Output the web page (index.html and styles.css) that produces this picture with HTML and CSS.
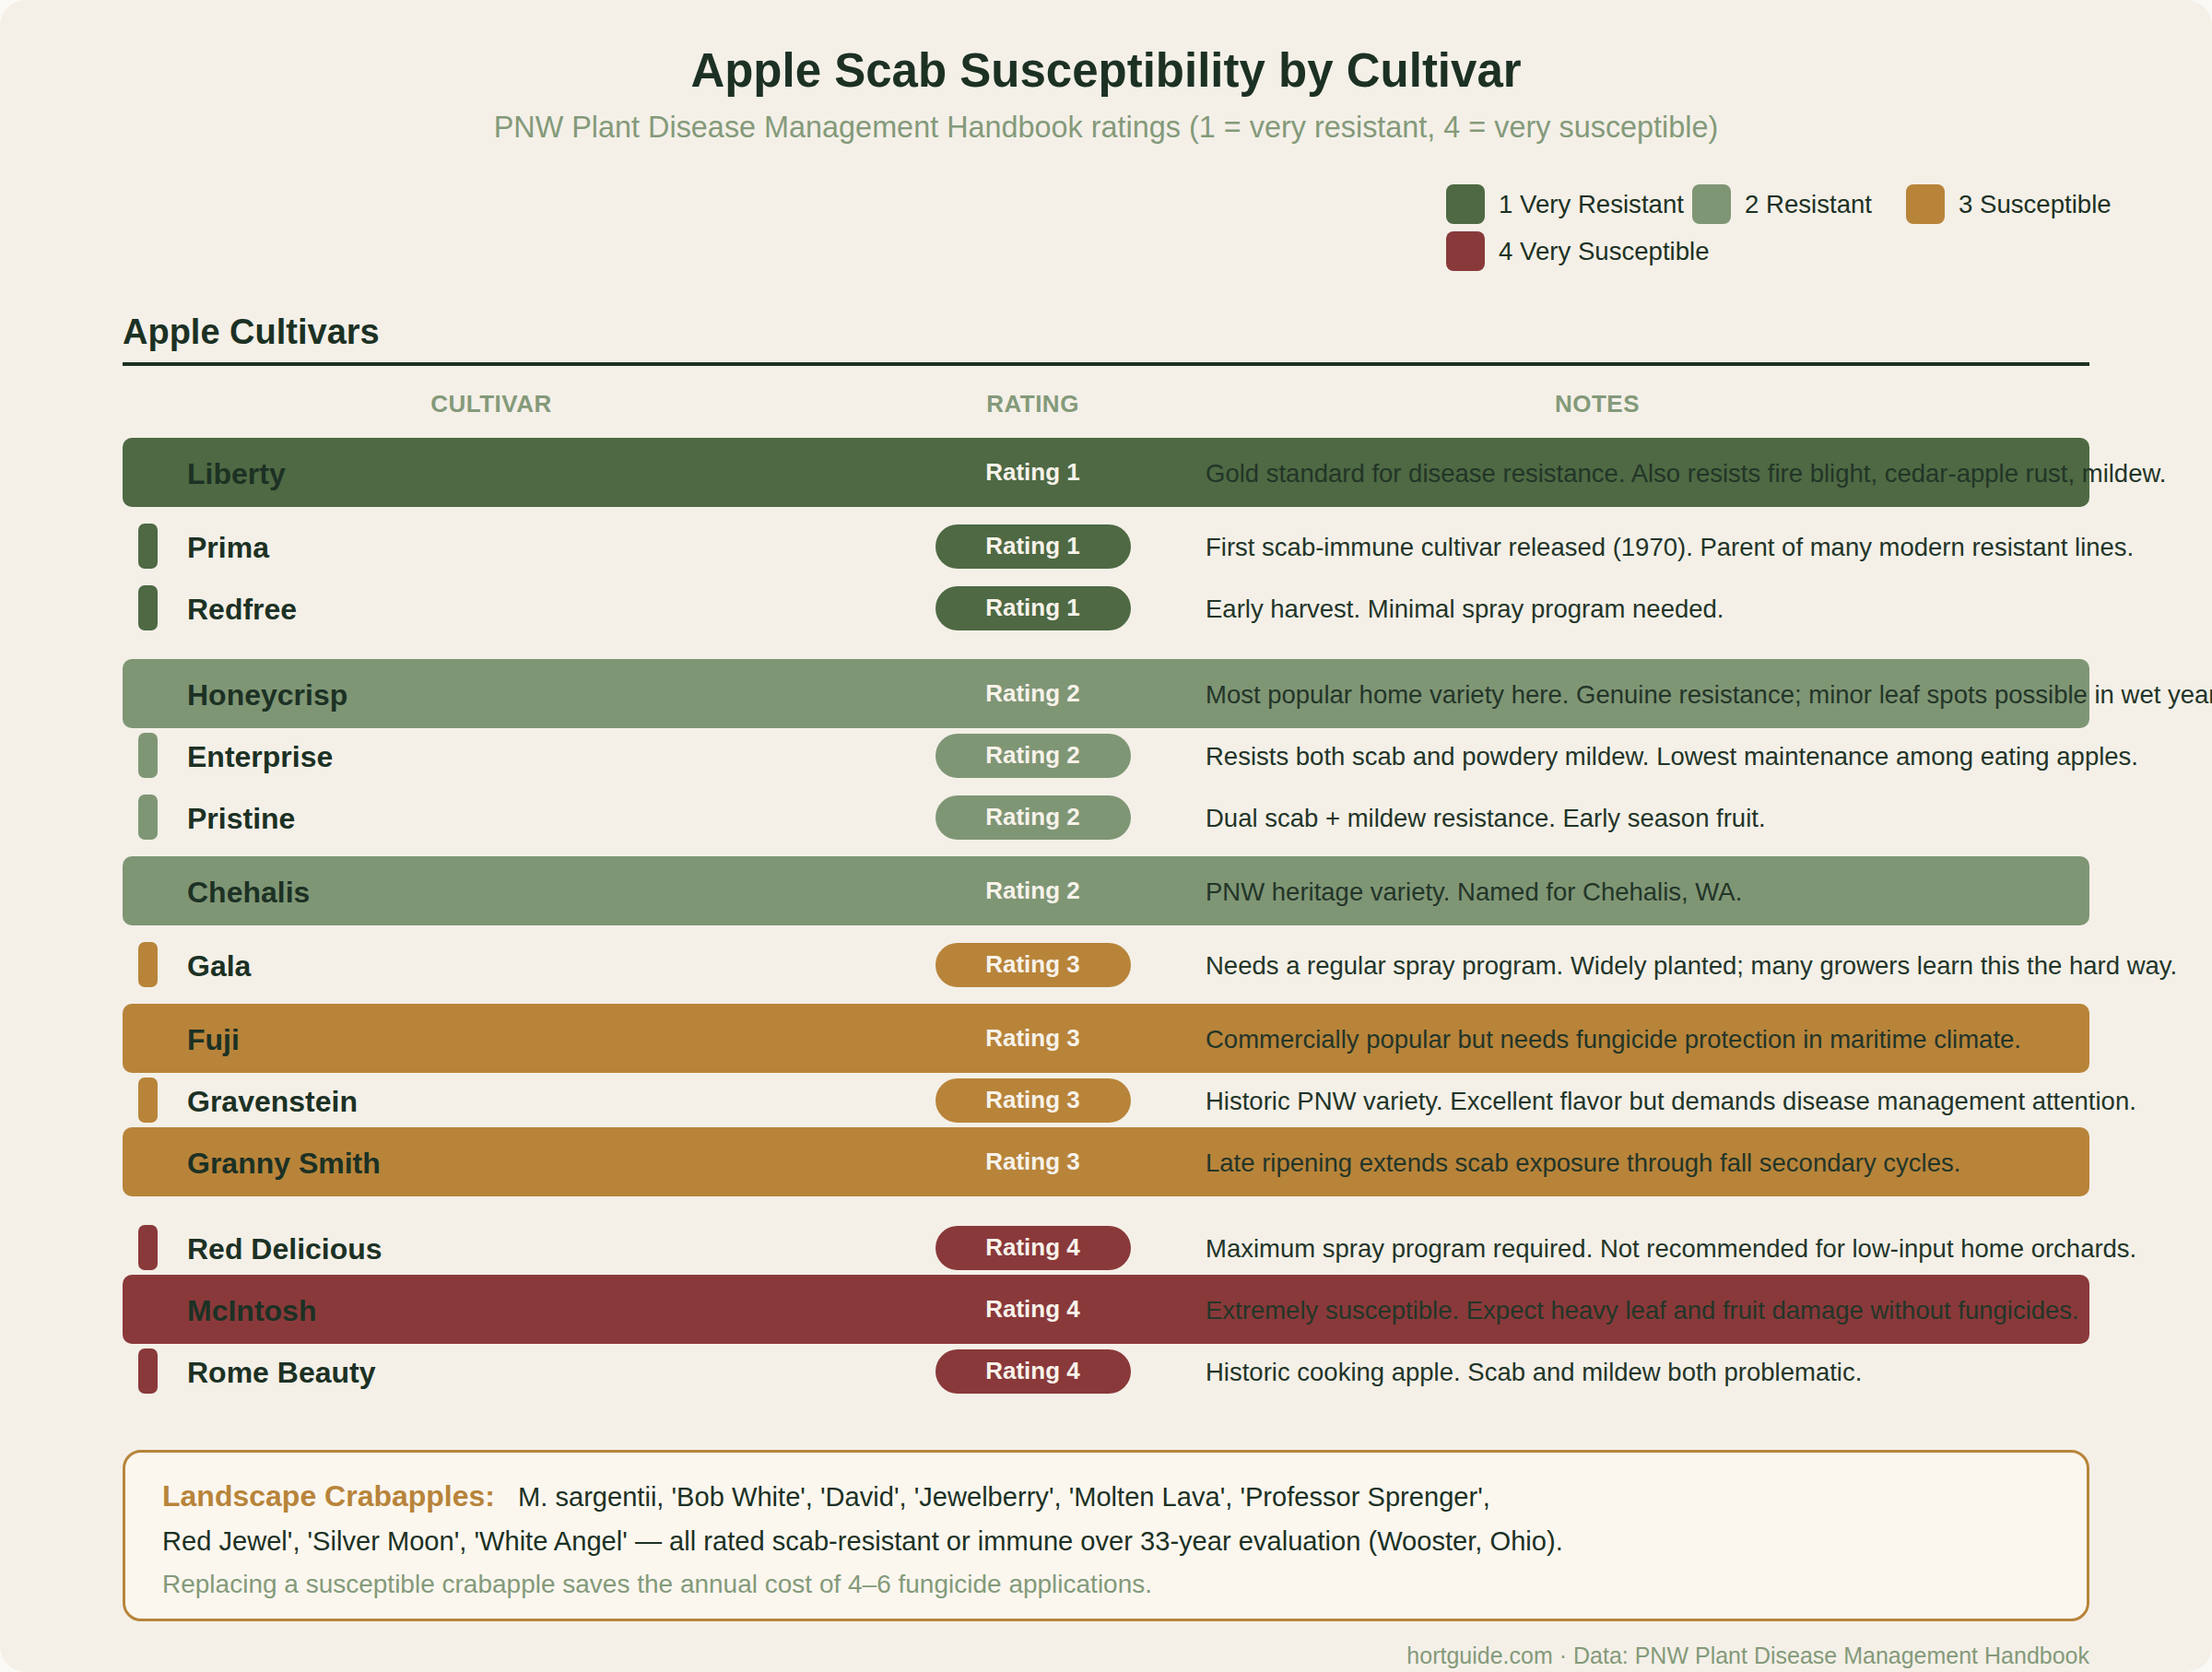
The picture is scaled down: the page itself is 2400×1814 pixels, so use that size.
FILE: index.html
```html
<!DOCTYPE html>
<html lang="en">
<head>
<meta charset="utf-8">
<title>Apple Scab Susceptibility by Cultivar</title>
<link rel="stylesheet" href="styles.css">
</head>
<body>
<div class="page">
  <header class="head">
    <h1 class="title">Apple Scab Susceptibility by Cultivar</h1>
    <p class="subtitle">PNW Plant Disease Management Handbook ratings (1 = very resistant, 4 = very susceptible)</p>
  </header>

  <div class="legend-wrap">
    <div class="legend">
      <div class="legend-item"><span class="swatch r1"></span><span>1 Very Resistant</span></div>
      <div class="legend-item"><span class="swatch r2"></span><span>2 Resistant</span></div>
      <div class="legend-item"><span class="swatch r3"></span><span>3 Susceptible</span></div>
      <div class="legend-item"><span class="swatch r4"></span><span>4 Very Susceptible</span></div>
    </div>
  </div>

  <h2 class="section-title">Apple Cultivars</h2>

  <div class="cols">
    <div class="col-h">CULTIVAR</div>
    <div class="col-h">RATING</div>
    <div class="col-h">NOTES</div>
  </div>

  <div class="rows">
    <div class="row hl r1 first">
      <div class="name-cell"><span class="marker"></span><span class="name">Liberty</span></div>
      <div class="rate-cell"><span class="pill">Rating 1</span></div>
      <div class="note">Gold standard for disease resistance. Also resists fire blight, cedar-apple rust, mildew.</div>
    </div>
    <div class="row r1 gap-m">
      <div class="name-cell"><span class="marker"></span><span class="name">Prima</span></div>
      <div class="rate-cell"><span class="pill">Rating 1</span></div>
      <div class="note">First scab-immune cultivar released (1970). Parent of many modern resistant lines.</div>
    </div>
    <div class="row r1 gap-m">
      <div class="name-cell"><span class="marker"></span><span class="name">Redfree</span></div>
      <div class="rate-cell"><span class="pill">Rating 1</span></div>
      <div class="note">Early harvest. Minimal spray program needed.</div>
    </div>
    <div class="row hl r2 gap-l">
      <div class="name-cell"><span class="marker"></span><span class="name">Honeycrisp</span></div>
      <div class="rate-cell"><span class="pill">Rating 2</span></div>
      <div class="note">Most popular home variety here. Genuine resistance; minor leaf spots possible in wet years.</div>
    </div>
    <div class="row r2 gap-s">
      <div class="name-cell"><span class="marker"></span><span class="name">Enterprise</span></div>
      <div class="rate-cell"><span class="pill">Rating 2</span></div>
      <div class="note">Resists both scab and powdery mildew. Lowest maintenance among eating apples.</div>
    </div>
    <div class="row r2 gap-m">
      <div class="name-cell"><span class="marker"></span><span class="name">Pristine</span></div>
      <div class="rate-cell"><span class="pill">Rating 2</span></div>
      <div class="note">Dual scab + mildew resistance. Early season fruit.</div>
    </div>
    <div class="row hl r2 gap-m">
      <div class="name-cell"><span class="marker"></span><span class="name">Chehalis</span></div>
      <div class="rate-cell"><span class="pill">Rating 2</span></div>
      <div class="note">PNW heritage variety. Named for Chehalis, WA.</div>
    </div>
    <div class="row r3 gap-m">
      <div class="name-cell"><span class="marker"></span><span class="name">Gala</span></div>
      <div class="rate-cell"><span class="pill">Rating 3</span></div>
      <div class="note">Needs a regular spray program. Widely planted; many growers learn this the hard way.</div>
    </div>
    <div class="row hl r3 gap-m">
      <div class="name-cell"><span class="marker"></span><span class="name">Fuji</span></div>
      <div class="rate-cell"><span class="pill">Rating 3</span></div>
      <div class="note">Commercially popular but needs fungicide protection in maritime climate.</div>
    </div>
    <div class="row r3 gap-s">
      <div class="name-cell"><span class="marker"></span><span class="name">Gravenstein</span></div>
      <div class="rate-cell"><span class="pill">Rating 3</span></div>
      <div class="note">Historic PNW variety. Excellent flavor but demands disease management attention.</div>
    </div>
    <div class="row hl r3 gap-s">
      <div class="name-cell"><span class="marker"></span><span class="name">Granny Smith</span></div>
      <div class="rate-cell"><span class="pill">Rating 3</span></div>
      <div class="note">Late ripening extends scab exposure through fall secondary cycles.</div>
    </div>
    <div class="row r4 gap-l">
      <div class="name-cell"><span class="marker"></span><span class="name">Red Delicious</span></div>
      <div class="rate-cell"><span class="pill">Rating 4</span></div>
      <div class="note">Maximum spray program required. Not recommended for low-input home orchards.</div>
    </div>
    <div class="row hl r4 gap-s">
      <div class="name-cell"><span class="marker"></span><span class="name">McIntosh</span></div>
      <div class="rate-cell"><span class="pill">Rating 4</span></div>
      <div class="note">Extremely susceptible. Expect heavy leaf and fruit damage without fungicides.</div>
    </div>
    <div class="row r4 gap-s">
      <div class="name-cell"><span class="marker"></span><span class="name">Rome Beauty</span></div>
      <div class="rate-cell"><span class="pill">Rating 4</span></div>
      <div class="note">Historic cooking apple. Scab and mildew both problematic.</div>
    </div>
  </div>

  <div class="crab">
    <p class="crab-main"><strong class="crab-label">Landscape Crabapples:</strong>M. sargentii, 'Bob White', 'David', 'Jewelberry', 'Molten Lava', 'Professor Sprenger',<br>Red Jewel', 'Silver Moon', 'White Angel' — all rated scab-resistant or immune over 33-year evaluation (Wooster, Ohio).</p>
    <p class="crab-note">Replacing a susceptible crabapple saves the annual cost of 4–6 fungicide applications.</p>
  </div>

  <footer class="credit">hortguide.com · Data: PNW Plant Disease Management Handbook</footer>
</div>
</body>
</html>
```

FILE: styles.css
```css
* { box-sizing: border-box; }

html, body {
  margin: 0;
  padding: 0;
  background: #fbf9f5;
}

body {
  font-family: "Liberation Sans", Arial, Helvetica, sans-serif;
  color: #1c3124;
}

.page {
  min-height: 1814px;
  background: #f4f0e8;
  border-radius: 28px;
  padding: 47px 133px 0;
  overflow: hidden;
}

.head { text-align: center; }

.title {
  margin: 0;
  font-size: 51px;
  line-height: 60px;
  font-weight: 700;
  color: #1c3124;
}

.subtitle {
  margin: 12px 0 0;
  font-size: 32.4px;
  line-height: 38px;
  color: #849a7a;
}

/* legend */
.legend-wrap {
  display: flex;
  justify-content: flex-end;
  margin-top: 43px;
  margin-right: -25px;
}

.legend {
  display: grid;
  grid-template-columns: 267px 232px 224px;
  row-gap: 8px;
}

.legend-item {
  display: flex;
  align-items: center;
  gap: 15px;
  font-size: 27.6px;
  line-height: 32px;
  color: #1c3124;
  white-space: nowrap;
}

.swatch {
  width: 42px;
  height: 43px;
  border-radius: 8px;
  flex: none;
}

.r1 .marker, .r1 .pill, .swatch.r1, .row.hl.r1 { background: #4e6943; }
.r2 .marker, .r2 .pill, .swatch.r2, .row.hl.r2 { background: #7f9675; }
.r3 .marker, .r3 .pill, .swatch.r3, .row.hl.r3 { background: #b8843a; }
.r4 .marker, .r4 .pill, .swatch.r4, .row.hl.r4 { background: #8a393a; }

/* section */
.section-title {
  margin: 44px 0 0;
  font-size: 38px;
  line-height: 44px;
  font-weight: 700;
  color: #1c3124;
  padding-bottom: 11px;
  border-bottom: 4px solid #1c3124;
}

.cols {
  display: grid;
  grid-template-columns: 800px 375px 850px;
  margin-top: 26px;
}

.col-h {
  text-align: center;
  font-size: 26px;
  line-height: 30px;
  font-weight: 700;
  letter-spacing: 0.5px;
  color: #849a7a;
}

/* rows */
.rows {
  margin-top: 22px;
  display: flex;
  flex-direction: column;
}

.row {
  display: grid;
  grid-template-columns: 800px 375px 850px;
  align-items: center;
  height: 49px;
  border-radius: 10px;
}

.row.hl {
  height: 75px;
}

.gap-s { margin-top: 5px; }
.gap-m { margin-top: 18px; }
.gap-l { margin-top: 31px; }

.name-cell {
  display: flex;
  align-items: center;
  gap: 32px;
  padding-left: 17px;
}

.marker {
  width: 21px;
  height: 49px;
  border-radius: 7px;
  flex: none;
}

.name {
  font-size: 32px;
  font-weight: 700;
  line-height: 40px;
  padding-top: 2px;
  color: #1c3124;
  white-space: nowrap;
}

.rate-cell {
  display: flex;
  justify-content: center;
}

.pill {
  width: 212px;
  height: 48px;
  border-radius: 24px;
  display: flex;
  align-items: center;
  justify-content: center;
  font-size: 26px;
  font-weight: 700;
  color: #f7f2ea;
}

.note {
  font-size: 27.5px;
  line-height: 36px;
  padding-top: 2px;
  color: #233528;
  white-space: nowrap;
}

/* crabapples box */
.crab {
  margin-top: 61px;
  background: #fbf7ef;
  border: 3px solid #b8843a;
  border-radius: 20px;
  padding: 23px 40px 20px;
}

.crab p { margin: 0; }

.crab-main {
  font-size: 29.1px;
  line-height: 48px;
  color: #1c3124;
}

.crab-label {
  font-size: 32px;
  color: #b8843a;
  margin-right: 25px;
}

.crab-note {
  margin-top: 6px !important;
  font-size: 28px;
  line-height: 34px;
  color: #849a7a;
}

.credit {
  margin-top: 22px;
  text-align: right;
  font-size: 25px;
  line-height: 30px;
  color: #849a7a;
}
```
